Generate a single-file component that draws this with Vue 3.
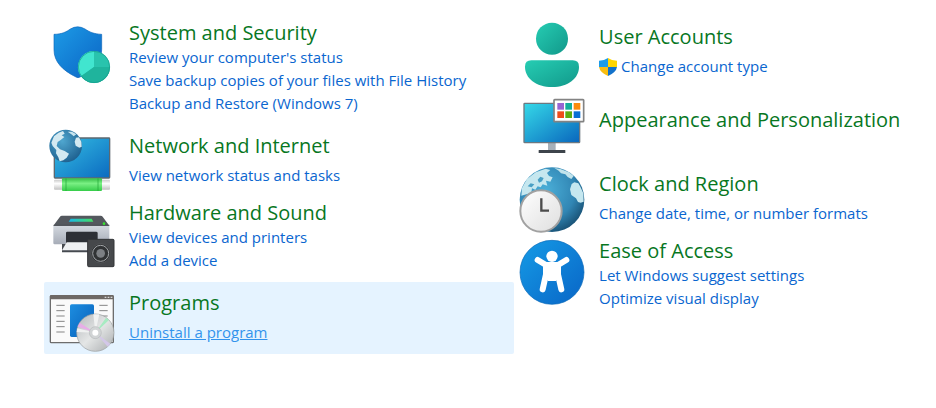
<template>
  <main class="control-panel">
    <div v-for="(column, index) in columns" :key="index" class="column">
      <section
        v-for="item in column"
        :key="item.icon"
        class="category"
        :class="{ active: item.icon === 'programs' }"
      >
        <!-- System and Security -->
        <svg v-if="item.icon === 'security'" class="icon" viewBox="27 -9 198 216" aria-hidden="true">
          <defs>
            <linearGradient id="shield" x1="0" y1="0" x2="1" y2="1">
              <stop offset="0" stop-color="#1d9be6" />
              <stop offset="1" stop-color="#0a63c4" />
            </linearGradient>
          </defs>
          <path d="M42 58C66 58 80 50 91 42Q113 29 135 42C148 51 162 57 185 58V104C185 140 158 170 120 186Q114 190 108 186C68 166 42 141 42 104Z" fill="url(#shield)" stroke="#0d66bb" stroke-width="2" />
          <circle cx="162" cy="156" r="48" fill="#29c3ad" />
          <path d="M162 156V108A48 48 0 0 0 123 184Z" fill="#41e5cf" />
          <path d="M162 156L123 184A48 48 0 0 0 210 156Z" fill="#1fb49d" />
          <circle cx="162" cy="156" r="47" fill="none" stroke="#159c8b" stroke-width="2" />
        </svg>

        <!-- Network and Internet -->
        <svg v-else-if="item.icon === 'network'" class="icon" viewBox="27 15 198 216" aria-hidden="true">
          <defs>
            <linearGradient id="net-screen" x1="0" y1="0" x2="1" y2="1">
              <stop offset="0" stop-color="#35bfe3" />
              <stop offset="1" stop-color="#0b6ac0" />
            </linearGradient>
            <linearGradient id="cable" x1="0" y1="0" x2="0" y2="1">
              <stop offset="0" stop-color="#35bd45" />
              <stop offset="0.4" stop-color="#7af084" />
              <stop offset="1" stop-color="#35cc49" />
            </linearGradient>
            <linearGradient id="plug" x1="0" y1="0" x2="0" y2="1">
              <stop offset="0" stop-color="#c9c9c9" />
              <stop offset="0.4" stop-color="#ffffff" />
              <stop offset="1" stop-color="#c2c2c2" />
            </linearGradient>
            <radialGradient id="net-globe" cx="0.4" cy="0.35" r="0.7">
              <stop offset="0" stop-color="#4fa6cf" />
              <stop offset="1" stop-color="#1d5f8e" />
            </radialGradient>
          </defs>
          <rect x="43" y="54" width="166" height="120" rx="2" fill="url(#net-screen)" stroke="#5d6870" stroke-width="4" />
          <rect x="42" y="179" width="168" height="30" rx="3" fill="url(#plug)" />
          <rect x="66" y="175" width="120" height="38" rx="3" fill="url(#cable)" />
          <path d="M78 175V213M174 175V213" stroke="#20a534" stroke-width="2" />
          <circle cx="77" cy="78" r="49" fill="url(#net-globe)" />
          <path d="M34 68L42 49L56 38L69 33L74 41L65 46L73 51L61 61L53 66L50 78L60 88L74 93L87 101L80 113L70 121L59 124L55 112L48 100L49 90L38 78Z" fill="#d3e9f1" />
          <path d="M83 35L96 35L109 43L101 49L94 43Z" fill="#c6e4ef" />
          <path d="M108 53L117 52L124 65L125 80L118 83L107 77L104 65Z" fill="#d3e9f1" />
        </svg>

        <!-- Hardware and Sound -->
        <svg v-else-if="item.icon === 'hardware'" class="icon" viewBox="27 -24 198 216" aria-hidden="true">
          <defs>
            <linearGradient id="printer-light" x1="0" y1="0" x2="1" y2="0">
              <stop offset="0" stop-color="#18b9e8" />
              <stop offset="1" stop-color="#45df62" />
            </linearGradient>
            <linearGradient id="printer-body" x1="0" y1="0" x2="0" y2="1">
              <stop offset="0" stop-color="#d3d8df" />
              <stop offset="1" stop-color="#a6acb7" />
            </linearGradient>
          </defs>
          <path d="M66 32H182Q186 32 188 35L208 62H40L60 35Q62 32 66 32Z" fill="#54585e" />
          <path d="M92 41H155L160 50H86Z" fill="url(#printer-light)" />
          <path d="M40 62H208V114Q208 118 204 118H44Q40 118 40 114Z" fill="url(#printer-body)" />
          <path d="M41 61H208" stroke="#45494f" stroke-width="3" />
          <circle cx="192" cy="56" r="4" fill="#38e32f" />
          <path d="M78 84Q78 80 82 80H168Q173 80 173 84V117H78Z" fill="#2d3036" />
          <path d="M66 117H180V142H66Z" fill="#464a50" />
          <path d="M80 112H170V136H66Z" fill="#eef0f2" />
          <rect x="143" y="103" width="79" height="82" rx="3" fill="#46484b" stroke="#323437" stroke-width="3" />
          <circle cx="182" cy="145" r="29" fill="#313335" stroke="#57595c" stroke-width="2" />
          <circle cx="182" cy="145" r="24" fill="none" stroke="#a3a6a9" stroke-width="3" />
          <circle cx="182" cy="145" r="13" fill="#7d8084" />
        </svg>

        <!-- Programs -->
        <svg v-else-if="item.icon === 'programs'" class="icon" viewBox="27 12 198 216" aria-hidden="true">
          <defs>
            <linearGradient id="disc" x1="0" y1="0" x2="1" y2="1">
              <stop offset="0" stop-color="#b4b8ba" />
              <stop offset="0.5" stop-color="#e4e6e6" />
              <stop offset="1" stop-color="#a8abad" />
            </linearGradient>
            <linearGradient id="program-page" x1="0" y1="0" x2="1" y2="1">
              <stop offset="0" stop-color="#1d8ee0" />
              <stop offset="1" stop-color="#075eb9" />
            </linearGradient>
          </defs>
          <rect x="31" y="53" width="189" height="141" rx="3" fill="#fafafa" stroke="#6d6d6d" stroke-width="4" />
          <path d="M30 64V55Q30 51 34 51H217Q221 51 221 55V64Z" fill="#6d6865" />
          <path d="M194 58H199M203 58H208M212 58H217" stroke="#d8d8d8" stroke-width="4" />
          <path d="M49 82H74M49 98H74M49 114H74M49 130H74M49 146H74M49 162H74M178 82H203M178 98H203M178 114H203" stroke="#858585" stroke-width="3" />
          <rect x="90" y="79" width="72" height="98" rx="5" fill="url(#program-page)" />
          <circle cx="166" cy="164" r="56" fill="url(#disc)" stroke="#999d9e" stroke-width="2" />
          <path d="M166 164L113 146L119 134Z" fill="#e7aee7" />
          <path d="M166 164L198 119L207 126Z" fill="#a7ebc2" />
          <path d="M166 164L211 197L203 206Z" fill="#d3c7e8" />
          <path d="M166 164L110 162L112 151ZM166 164L160 109L178 109Z" fill="#f0f1f1" />
          <circle cx="166" cy="164" r="18" fill="#d1d4d5" stroke="#b7babb" stroke-width="2" />
          <circle cx="166" cy="164" r="9" fill="#ffffff" />
        </svg>

        <!-- User Accounts -->
        <svg v-else-if="item.icon === 'users'" class="icon" viewBox="27 3 198 216" aria-hidden="true">
          <defs>
            <linearGradient id="user-fill" x1="0" y1="0" x2="1" y2="1">
              <stop offset="0" stop-color="#26cdb3" />
              <stop offset="1" stop-color="#11988a" />
            </linearGradient>
          </defs>
          <circle cx="126" cy="71" r="48" fill="url(#user-fill)" />
          <path d="M64 136H188Q207 136 207 155C207 190 174 216 126 216S45 190 45 155Q45 136 64 136Z" fill="url(#user-fill)" />
        </svg>

        <!-- Appearance and Personalization -->
        <svg v-else-if="item.icon === 'appearance'" class="icon" viewBox="27 -12 198 216" aria-hidden="true">
          <defs>
            <linearGradient id="desktop" x1="0" y1="0" x2="1" y2="1">
              <stop offset="0" stop-color="#35d9e8" />
              <stop offset="1" stop-color="#0966bd" />
            </linearGradient>
          </defs>
          <rect x="114" y="152" width="23" height="25" fill="#a6b0b9" />
          <rect x="86" y="174" width="80" height="9" rx="1" fill="#3d444b" />
          <rect x="42" y="34" width="167" height="118" rx="2" fill="url(#desktop)" stroke="#6d7880" stroke-width="4" />
          <rect x="132" y="23" width="89" height="66" rx="2" fill="#ffffff" stroke="#838383" stroke-width="5" />
          <rect x="142" y="33" width="20" height="20" fill="#9765d2" />
          <rect x="166" y="33" width="20" height="20" fill="#14af9c" />
          <rect x="191" y="33" width="20" height="20" fill="#fc8b0b" />
          <rect x="142" y="58" width="20" height="20" fill="#ee4d19" />
          <rect x="166" y="58" width="20" height="20" fill="#5bad12" />
          <rect x="191" y="58" width="20" height="20" fill="#0a70d4" />
        </svg>

        <!-- Clock and Region -->
        <svg v-else-if="item.icon === 'clock'" class="icon" viewBox="27 9 198 216" aria-hidden="true">
          <defs>
            <radialGradient id="globe" cx="0.4" cy="0.35" r="0.7">
              <stop offset="0" stop-color="#4bafd8" />
              <stop offset="0.65" stop-color="#3186b4" />
              <stop offset="1" stop-color="#174e71" />
            </radialGradient>
            <linearGradient id="clock-face" x1="0" y1="0" x2="1" y2="1">
              <stop offset="0" stop-color="#ffffff" />
              <stop offset="1" stop-color="#dedede" />
            </linearGradient>
          </defs>
          <circle cx="126" cy="119" r="97" fill="url(#globe)" />
          <path d="M36 84L51 57L77 37L107 26L121 30L111 39L117 48L128 52L121 65L108 62L112 77L98 73L92 82L83 79L76 89L66 85L64 98L49 103L34 107Z" fill="#c5e7ef" />
          <path d="M83 59L91 50L101 54L96 64L87 68ZM53 79L62 70L73 73L65 82Z" fill="#489fc4" />
          <path d="M133 24L151 27L177 37L191 48L184 57L173 51L166 43L153 40L146 32Z" fill="#c0e3ec" />
          <path d="M185 72L193 67L205 70L211 80L220 100L221 125L212 128L204 126L198 115L184 105L180 88Z" fill="#c5e7ef" />
          <circle cx="93" cy="153" r="62" fill="url(#clock-face)" stroke="#a1a1a1" stroke-width="6" />
          <path d="M94 115V152H117" fill="none" stroke="#4c4c4c" stroke-width="7" />
        </svg>

        <!-- Ease of Access -->
        <svg v-else class="icon" viewBox="27 0 198 216" aria-hidden="true">
          <defs>
            <linearGradient id="ease" x1="0" y1="0" x2="1" y2="1">
              <stop offset="0" stop-color="#159be6" />
              <stop offset="1" stop-color="#0965c6" />
            </linearGradient>
          </defs>
          <circle cx="126" cy="112" r="96" fill="url(#ease)" stroke="#0868b8" stroke-width="2" />
          <circle cx="126" cy="64" r="17" fill="#ffffff" />
          <path d="M83 75L108 90H144L169 75" fill="none" stroke="#ffffff" stroke-width="18" stroke-linecap="round" stroke-linejoin="round" />
          <path d="M108 90H144V118L154 163M144 118H108V90M108 118L98 163" fill="none" stroke="#ffffff" stroke-width="18" stroke-linecap="round" stroke-linejoin="round" />
          <path d="M104 88H148V122L138 138H114L104 122Z" fill="#ffffff" />
        </svg>

        <div
          class="details"
          :class="{ compact: item.links.length === 2, full: item.links.length === 3, bare: !item.links.length }"
        >
          <h2><a href="#">{{ item.title }}</a></h2>
          <ul v-if="item.links.length">
            <li v-for="link in item.links" :key="link">
              <svg v-if="item.icon === 'users'" class="uac" viewBox="0 0 20 20" aria-hidden="true">
                <path d="M10 0Q6 3 0 3V10H10Z" fill="#1b9be8" />
                <path d="M10 0Q14 3 20 3V10H10Z" fill="#ffd500" />
                <path d="M0 10Q1 16 10 20V10Z" fill="#f8bd10" />
                <path d="M20 10Q19 16 10 20V10Z" fill="#1272cb" />
              </svg>
              <a href="#">{{ link }}</a>
            </li>
          </ul>
        </div>
      </section>
    </div>
  </main>
</template>

<script setup>
const columns = [
  [
    {
      icon: 'security',
      title: 'System and Security',
      links: [
        "Review your computer's status",
        'Save backup copies of your files with File History',
        'Backup and Restore (Windows 7)'
      ]
    },
    { icon: 'network', title: 'Network and Internet', links: ['View network status and tasks'] },
    { icon: 'hardware', title: 'Hardware and Sound', links: ['View devices and printers', 'Add a device'] },
    { icon: 'programs', title: 'Programs', links: ['Uninstall a program'] }
  ],
  [
    { icon: 'users', title: 'User Accounts', links: ['Change account type'] },
    { icon: 'appearance', title: 'Appearance and Personalization', links: [] },
    { icon: 'clock', title: 'Clock and Region', links: ['Change date, time, or number formats'] },
    { icon: 'ease', title: 'Ease of Access', links: ['Let Windows suggest settings', 'Optimize visual display'] }
  ]
];
</script>

<style>
body {
  margin: 0;
  background: #ffffff;
}
</style>

<style scoped>
.control-panel {
  display: grid;
  grid-template-columns: 39fr 35fr;
  padding: 12px 0 54px 44px;
  font-family: "Open Sans", "Noto Sans", sans-serif;
}

.column + .column {
  padding-top: 4px;
}

.category {
  display: flex;
  gap: 14px;
  padding-left: 5px;
}

.category.active {
  background: #e5f3ff;
  border-radius: 2px;
}

.icon {
  flex: none;
  width: 66px;
  height: 72px;
}

.details {
  padding: 8px 0 10px;
}

.details.compact {
  padding-top: 3px;
}

.details.bare {
  padding: 19px 0 30px;
}

h2 {
  margin: 0 0 5px;
  font-size: 20px;
  font-weight: 400;
  line-height: 26px;
}

.compact h2,
.full h2,
.bare h2 {
  margin-bottom: 0;
}

ul {
  margin: 0;
  padding: 0;
  list-style: none;
}

li {
  display: flex;
  align-items: center;
  gap: 4px;
  font-size: 15px;
  line-height: 23px;
}

a {
  color: #0a66cf;
  text-decoration: none;
  white-space: nowrap;
}

h2 a {
  color: #08771f;
}

.active li a {
  color: #3393ec;
  text-decoration: underline;
}

.uac {
  width: 18px;
  height: 20px;
}
</style>
